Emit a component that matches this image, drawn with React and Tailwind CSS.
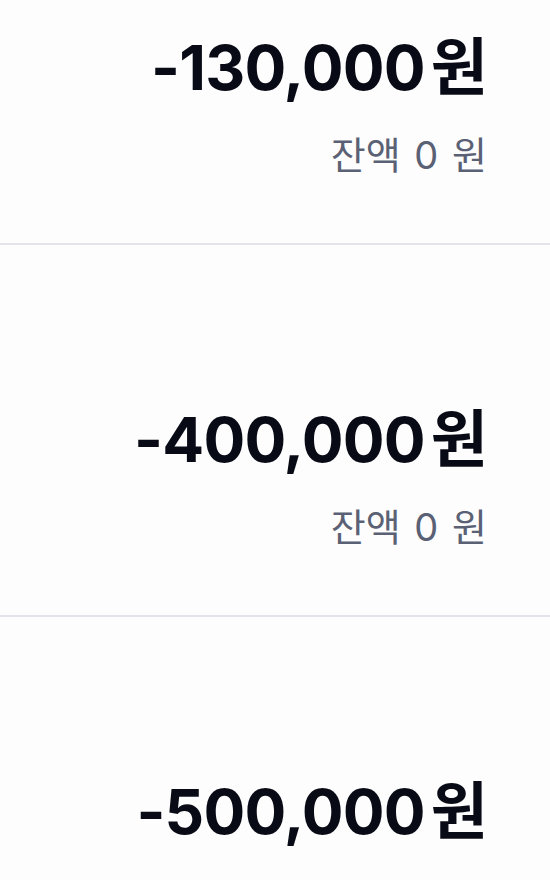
import React from "react";

const items = ["-130,000", "-400,000", "-500,000"];

export default function App() {
  return (
    <div className="h-[880px] overflow-hidden bg-[#fdfdfd]">
      <div className="-mt-[127px]">
        {items.map((a) => (
          <div
            key={a}
            className="h-[372px] border-b-2 border-[#e2e4ea] flex flex-col items-end pt-[164px] pr-[63px]"
          >
            <div
              className="text-[62px] leading-none font-bold text-[#080a16] tracking-[-0.8px]"
              style={{ fontFamily: 'Inter, "Noto Sans CJK KR", sans-serif' }}
            >
              {a}
              <span className="ml-[6px]">원</span>
            </div>
            <div
              className="mt-[37px] text-[38px] leading-none text-[#5b6174] [word-spacing:3px]"
              style={{ fontFamily: 'Inter, "Noto Sans CJK KR", sans-serif' }}
            >
              잔액 0 원
            </div>
          </div>
        ))}
      </div>
    </div>
  );
}
